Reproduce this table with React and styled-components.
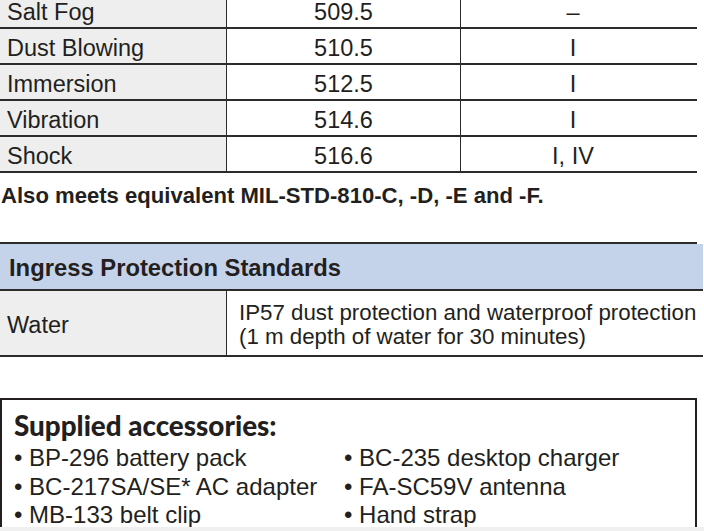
import React from 'react'
import styled, { createGlobalStyle } from 'styled-components'

const GlobalStyle = createGlobalStyle`
    html, body {
        margin: 0;
        padding: 0;
        background: #ffffff;
    }
    body {
        font-family: "Liberation Sans", Arial, sans-serif;
        color: #231f20;
    }
`

const Page = styled.div`
    width: 704px;
    height: 531px;
    overflow: hidden;
    display: flex;
    flex-direction: column;
`

const Sheet = styled.div`
    width: 697px;
    flex: 1;
    min-height: 0;
    display: flex;
    flex-direction: column;
`

const Table = styled.div`
    display: grid;
    grid-template-columns: ${props => props.columns};
    margin-top: ${props => props.offset || 0}px;
    border-top: ${props => props.topBorder ? '2px solid #2b2b2b' : 'none'};
`

const Cell = styled.div`
    height: ${props => props.height}px;
    display: flex;
    align-items: center;
    justify-content: ${props => props.center ? 'center' : 'flex-start'};
    padding: 3px ${props => props.center ? (props.inset || 0) : 7}px 0 ${props => props.center ? 0 : 7}px;
    box-sizing: border-box;
    border-bottom: 2px solid #2b2b2b;
    border-right: ${props => props.divider ? '1.5px solid #2b2b2b' : 'none'};
    background: ${props => props.shade ? '#eeeeee' : '#ffffff'};
    font-size: 23.5px;
    line-height: 24px;
    white-space: nowrap;
`

const HeaderCell = styled.div`
    grid-column: 1 / -1;
    height: 47px;
    box-sizing: border-box;
    display: flex;
    align-items: center;
    padding: 2px 9px 0;
    background: #c5d3ea;
    border-bottom: 2px solid #2b2b2b;
    font-weight: bold;
    font-size: 23.8px;
`

const Note = styled.div`
    margin: 10px 0 0 1px;
    height: 26px;
    font-weight: bold;
    font-size: 22.1px;
    line-height: 26px;
`

const Spacer = styled.div`
    height: ${props => props.size}px;
`

const Multiline = styled.div`
    display: flex;
    flex-direction: column;
    padding-left: 5px;
    font-size: 22.3px;
    line-height: 24px;
    white-space: nowrap;
`

const Box = styled.div`
    flex: 1;
    min-height: 0;
    border: 2.5px solid #231f20;
    border-bottom: none;
    padding: 11px 0 0 12px;
    overflow: hidden;
`

const BoxTitle = styled.div`
    font-family: Lato, "Liberation Sans", sans-serif;
    font-weight: 900;
    font-size: 27.8px;
    line-height: 30px;
`

const List = styled.div`
    display: grid;
    grid-template-columns: 330px 1fr;
    margin-top: 3px;
`

const Item = styled.div`
    font-size: 24px;
    line-height: 28.5px;
    white-space: nowrap;
`

const Footer = styled.div`
    height: 4px;
    background: #f0f0f0;
`

const rows = [
    ['Salt Fog', '509.5', '–'],
    ['Dust Blowing', '510.5', 'I'],
    ['Immersion', '512.5', 'I'],
    ['Vibration', '514.6', 'I'],
    ['Shock', '516.6', 'I, IV'],
]

const accessories = [
    'BP-296 battery pack',
    'BC-235 desktop charger',
    'BC-217SA/SE* AC adapter',
    'FA-SC59V antenna',
    'MB-133 belt clip',
    'Hand strap',
]

export default function App() {
    return (
        <Page>
            <GlobalStyle />
            <Sheet>
                <Table columns="227px 234px 1fr" offset={-7}>
                    {rows.map(([name, method, proc]) => (
                        <React.Fragment key={name}>
                            <Cell height={36} shade divider>{name}</Cell>
                            <Cell height={36} center divider>{method}</Cell>
                            <Cell height={36} center inset={12}>{proc}</Cell>
                        </React.Fragment>
                    ))}
                </Table>

                <Note>Also meets equivalent MIL-STD-810-C, -D, -E and -F.</Note>

                <Spacer size={33} />

                <Table columns="227px 1fr" topBorder>
                    <HeaderCell>Ingress Protection Standards</HeaderCell>
                    <Cell height={66} shade divider>Water</Cell>
                    <Cell height={66}>
                        <Multiline>
                            <span>IP57 dust protection and waterproof protection</span>
                            <span>(1 m depth of water for 30 minutes)</span>
                        </Multiline>
                    </Cell>
                </Table>

                <Spacer size={41} />

                <Box>
                    <BoxTitle>Supplied accessories:</BoxTitle>
                    <List>
                        {accessories.map(a => (
                            <Item key={a}>• {a}</Item>
                        ))}
                    </List>
                </Box>
            </Sheet>
            <Footer />
        </Page>
    )
}
